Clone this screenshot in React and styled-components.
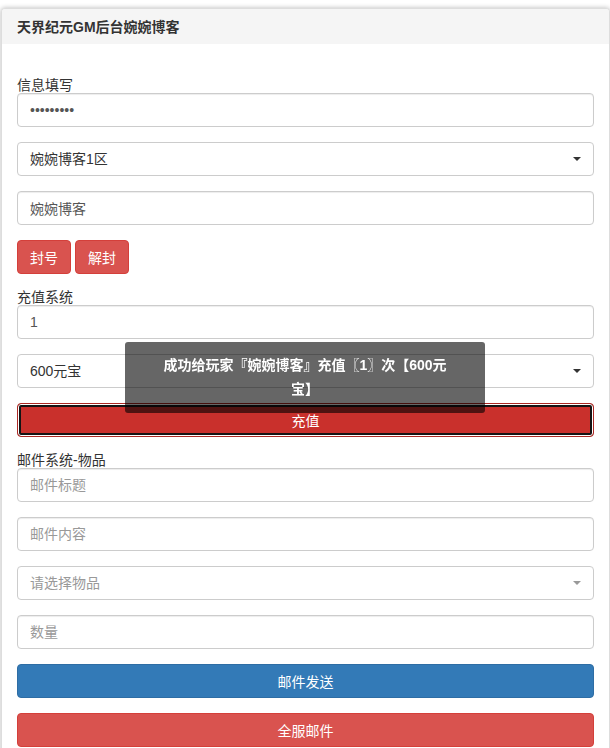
import React from 'react';
import styled, { createGlobalStyle } from 'styled-components';

const GlobalStyle = createGlobalStyle`
  html, body {
    margin: 0;
    background: #fff;
  }
  body {
    padding: 8px 0 0 1px;
    font-family: "Liberation Sans", "Noto Sans CJK SC", sans-serif;
    font-size: 14px;
    line-height: 20px;
    color: #333;
    overflow: hidden;
  }
  * {
    box-sizing: border-box;
  }
`;

const Panel = styled.div`
  width: 100%;
  background: #fff;
  border: 1px solid #ddd;
  border-radius: 4px;
  box-shadow: 0 0 5px rgba(0, 0, 0, 0.28);
`;

const Heading = styled.div`
  height: 35px;
  display: flex;
  align-items: center;
  padding: 0 15px;
  background: #f5f5f5;
  border-radius: 3px 3px 0 0;
  font-weight: bold;
  color: #333;
`;

const Body = styled.div`
  padding: 29px 15px 15px;
  display: flex;
  flex-direction: column;
`;

// text sits a little low in its 20px line, as in the original
const Label = styled.div`
  height: 20px;
  line-height: 24px;
  margin-top: ${(p) => (p.first ? '0' : '-4px')};
  color: #333;
`;

const Input = styled.input`
  display: block;
  width: 100%;
  height: 34px;
  margin-bottom: 15px;
  padding: 6px 12px;
  font-family: inherit;
  font-size: 14px;
  color: #555;
  background: #fff;
  border: 1px solid #ccc;
  border-radius: 4px;
  box-shadow: inset 0 1px 1px rgba(0, 0, 0, 0.075);
  outline: none;

  &::placeholder {
    color: #999;
  }
`;

const Select = styled.div`
  display: flex;
  align-items: center;
  justify-content: space-between;
  height: 34px;
  margin-bottom: 15px;
  padding: 0 12px;
  color: ${(p) => (p.placeholder ? '#999' : '#333')};
  border: 1px solid #ccc;
  border-radius: 4px;
  background: #fff;

  &::after {
    content: '';
    border-top: 4px solid ${(p) => (p.placeholder ? '#999' : '#333')};
    border-left: 4px solid transparent;
    border-right: 4px solid transparent;
  }
`;

const BtnRow = styled.div`
  display: flex;
  gap: 4px;
  margin-bottom: 15px;
`;

const colors = {
  danger: { bg: '#d9534f', border: '#d43f3a' },
  primary: { bg: '#337ab7', border: '#2e6da4' },
  active: { bg: '#c9302c', border: '#ac2925' },
};

const Button = styled.button`
  display: flex;
  align-items: center;
  justify-content: center;
  height: 34px;
  width: ${(p) => (p.block ? '100%' : 'auto')};
  margin-bottom: ${(p) => (p.block ? '15px' : '0')};
  padding: 6px 12px;
  font-family: inherit;
  font-size: 14px;
  color: #fff;
  background: ${(p) => colors[p.variant].bg};
  border: 1px solid ${(p) => colors[p.variant].border};
  border-radius: 4px;
  box-shadow: ${(p) =>
    p.focused ? 'inset 0 0 0 1px #fff, inset 0 0 0 3px #141414' : 'none'};
  cursor: pointer;
`;

const Toast = styled.div`
  position: fixed;
  top: 342px;
  left: 50%;
  transform: translateX(-50%);
  width: 360px;
  padding: 11px 35px 12px;
  background: rgba(0, 0, 0, 0.6);
  color: #fff;
  font-weight: bold;
  line-height: 24px;
  text-align: center;
  border-radius: 3px;
`;

export default function App() {
  return (
    <>
      <GlobalStyle />
      <Panel>
        <Heading>天界纪元GM后台婉婉博客</Heading>
        <Body>
          <Label first>信息填写</Label>
          <Input type="password" value="123456789" readOnly />
          <Select>婉婉博客1区</Select>
          <Input type="text" value="婉婉博客" readOnly />
          <BtnRow>
            <Button variant="danger">封号</Button>
            <Button variant="danger">解封</Button>
          </BtnRow>

          <Label>充值系统</Label>
          <Input type="text" value="1" readOnly />
          <Select>600元宝</Select>
          <Button block variant="active" focused>充值</Button>

          <Label>邮件系统-物品</Label>
          <Input type="text" placeholder="邮件标题" />
          <Input type="text" placeholder="邮件内容" />
          <Select placeholder>请选择物品</Select>
          <Input type="text" placeholder="数量" />
          <Button block variant="primary">邮件发送</Button>
          <Button block variant="danger">全服邮件</Button>
        </Body>
      </Panel>
      <Toast>成功给玩家『婉婉博客』充值〖1〗次【600元宝】</Toast>
    </>
  );
}
